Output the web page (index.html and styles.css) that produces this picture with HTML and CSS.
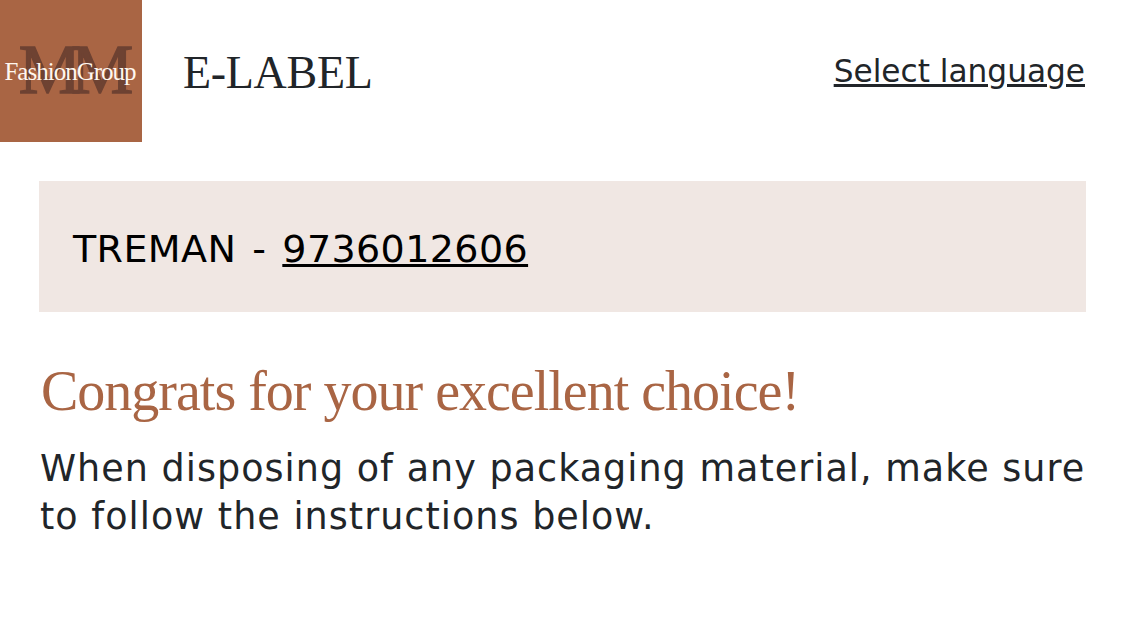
FILE: index.html
```html
<!DOCTYPE html>
<html lang="en">
<head>
<meta charset="utf-8">
<title>E-Label</title>
<link rel="stylesheet" href="styles.css">
</head>
<body>
<header class="top">
  <div class="logo">
    <span class="logo-mm">MM</span>
    <span class="logo-name">FashionGroup</span>
  </div>
  <div class="brand">E-LABEL</div>
  <a class="lang" href="#">Select language</a>
</header>
<main class="content">
  <div class="product"><span>TREMAN - <a href="#">9736012606</a></span></div>
  <h1 class="title">Congrats for your excellent choice!</h1>
  <p class="intro">When disposing of any packaging material, make sure to follow the instructions below.</p>
</main>
</body>
</html>
```
FILE: styles.css
```css
html, body { margin: 0; padding: 0; background: #fff; overflow: hidden; }
body { font-family: "DejaVu Sans", sans-serif; color: #212529; }
.top { display: flex; align-items: center; height: 141px; padding-right: 40px; }
.logo { position: relative; width: 142px; height: 142px; background: #a96544; overflow: hidden; flex: none; }
.logo-mm { position: absolute; left: 0; right: 0; top: 30px; text-align: center; font: 400 70px/80px "Liberation Serif", serif; -webkit-text-stroke: 1.5px #6e4232; color: #6e4232; letter-spacing: -10px; }
.logo-name { position: absolute; left: 0; right: 2px; top: 56px; text-align: center; font: 400 25px/32px "Liberation Serif", serif; color: #fff7ef; letter-spacing: -1px; }
.brand { margin-left: 41px; padding-top: 4px; font: 400 46px/1.2 "Liberation Serif", serif; letter-spacing: -0.3px; color: #212529; }
.lang { margin-left: auto; font-size: 31.2px; color: #212529; text-decoration: underline; }
.content { padding: 40px 39px 0 39px; }
.product { background: #f0e7e3; height: 131px; box-sizing: border-box; padding: 5px 34px 0; display: flex; align-items: center; font-size: 38px; color: #000; letter-spacing: 0.4px; word-spacing: 3.5px; }
.product a { color: #000; }
.title { margin: 44px 0 0 2px; font: 400 56px/70px "Liberation Serif", serif; letter-spacing: -1px; color: #a96544; }
.intro { margin: 19px 0 0 1px; font-size: 36.5px; line-height: 48px; letter-spacing: 1.03px; }
```
